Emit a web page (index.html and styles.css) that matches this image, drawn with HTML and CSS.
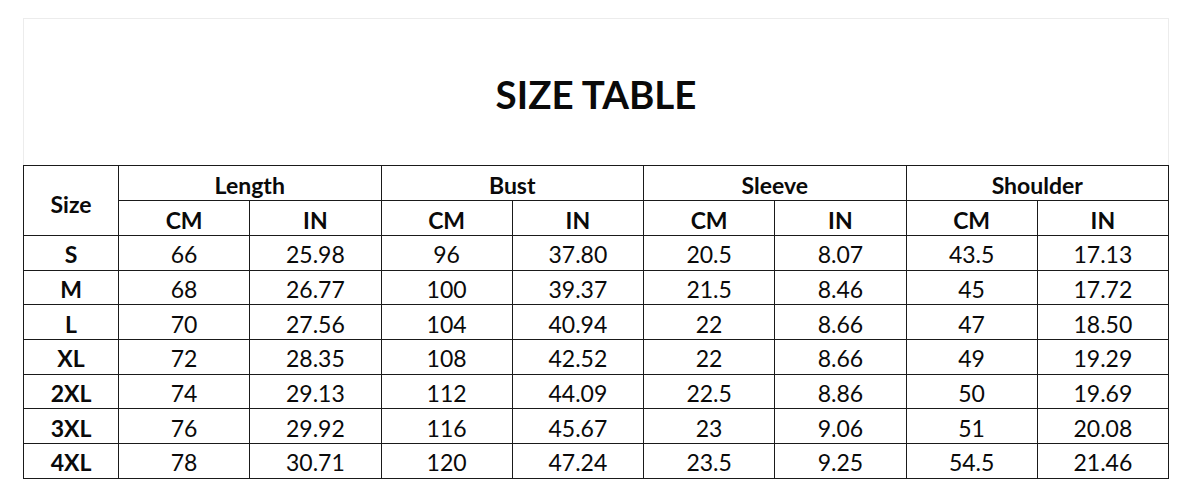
FILE: index.html
```html
<!DOCTYPE html>
<html>
<head>
<meta charset="utf-8">
<link rel="stylesheet" href="styles.css">
</head>
<body>
<div class="sheet">
  <div class="title-box"><h1 class="title">SIZE TABLE</h1></div>
  <table class="size-table">
    <colgroup>
      <col class="c-size">
      <col><col><col><col><col><col><col><col>
    </colgroup>
    <thead>
      <tr class="hrow">
        <th rowspan="2" class="size-head">Size</th>
        <th colspan="2">Length</th>
        <th colspan="2">Bust</th>
        <th colspan="2">Sleeve</th>
        <th colspan="2">Shoulder</th>
      </tr>
      <tr class="hrow">
        <th>CM</th><th>IN</th>
        <th>CM</th><th>IN</th>
        <th>CM</th><th>IN</th>
        <th>CM</th><th>IN</th>
      </tr>
    </thead>
    <tbody>
      <tr><th>S</th><td>66</td><td>25.98</td><td>96</td><td>37.80</td><td>20.5</td><td>8.07</td><td>43.5</td><td>17.13</td></tr>
      <tr><th>M</th><td>68</td><td>26.77</td><td>100</td><td>39.37</td><td>21.5</td><td>8.46</td><td>45</td><td>17.72</td></tr>
      <tr><th>L</th><td>70</td><td>27.56</td><td>104</td><td>40.94</td><td>22</td><td>8.66</td><td>47</td><td>18.50</td></tr>
      <tr><th>XL</th><td>72</td><td>28.35</td><td>108</td><td>42.52</td><td>22</td><td>8.66</td><td>49</td><td>19.29</td></tr>
      <tr><th>2XL</th><td>74</td><td>29.13</td><td>112</td><td>44.09</td><td>22.5</td><td>8.86</td><td>50</td><td>19.69</td></tr>
      <tr><th>3XL</th><td>76</td><td>29.92</td><td>116</td><td>45.67</td><td>23</td><td>9.06</td><td>51</td><td>20.08</td></tr>
      <tr><th>4XL</th><td>78</td><td>30.71</td><td>120</td><td>47.24</td><td>23.5</td><td>9.25</td><td>54.5</td><td>21.46</td></tr>
    </tbody>
  </table>
</div>
</body>
</html>
```
FILE: styles.css
```css
html, body {
  margin: 0;
  padding: 0;
  background: #ffffff;
}
body {
  font-family: Lato, "Liberation Sans", sans-serif;
  color: #0a0a0a;
}
.sheet {
  width: 1146px;
  margin: 18px 0 0 23px;
}
.title-box {
  height: 147px;
  border: 1px solid #ececec;
  border-bottom: none;
  box-sizing: border-box;
  display: flex;
  align-items: center;
  justify-content: center;
}
.title {
  margin: 0;
  padding-top: 4px;
  font-size: 38.5px;
  font-weight: 700;
}
.size-table {
  width: 1146px;
  table-layout: fixed;
  border-collapse: collapse;
  font-size: 23px;
}
.c-size {
  width: 95px;
}
.size-table th,
.size-table td {
  border: 1px solid #1a1a1a;
  text-align: center;
  padding: 3px 0 0 0;
  line-height: 20px;
}
.size-table th {
  font-weight: 700;
}
.size-table td {
  font-weight: 400;
}
.size-table .size-head {
  padding-top: 6px;
}
.size-table tr {
  height: 35px;
}
.size-table tbody tr {
  height: 34.7px;
}
```
